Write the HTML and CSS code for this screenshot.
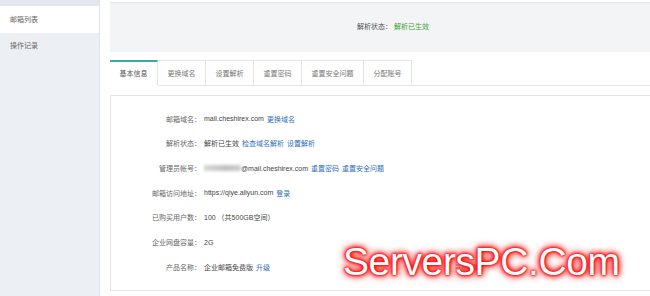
FILE: index.html
```html
<!DOCTYPE html>
<html lang="zh-CN">
<head>
    <meta charset="UTF-8" />
    <title>邮箱管理 | 基本信息</title>
    <link rel="stylesheet" href="styles.css">
</head>
<body>
    <div class="layout">
        <div class="sidebar">
            <div class="side-top"></div>
            <div class="side-item active">邮箱列表</div>
            <div class="side-item">操作记录</div>
        </div>
        <div class="main">
            <div class="status-panel">
                <span class="label-text">解析状态：</span>
                <span class="green">解析已生效</span>
            </div>
            <div class="tabs">
                <div class="tab active">基本信息</div>
                <div class="tab">更换域名</div>
                <div class="tab">设置解析</div>
                <div class="tab">重置密码</div>
                <div class="tab">重置安全问题</div>
                <div class="tab">分配账号</div>
                <div class="tab-rest"></div>
            </div>
            <div class="info-box">
                <div class="row">
                    <span class="label">邮箱域名：</span>
                    <span class="value">mail.cheshirex.com</span>
                    <a class="link">更换域名</a>
                </div>
                <div class="row">
                    <span class="label">解析状态：</span>
                    <span class="value green">解析已生效</span>
                    <a class="link">检查域名解析</a>
                    <a class="link">设置解析</a>
                </div>
                <div class="row">
                    <span class="label">管理员帐号：</span>
                    <span class="blur"></span>
                    <span class="value tight">@mail.cheshirex.com</span>
                    <a class="link">重置密码</a>
                    <a class="link">重置安全问题</a>
                </div>
                <div class="row">
                    <span class="label">邮箱访问地址：</span>
                    <span class="value">https://qiye.aliyun.com</span>
                    <a class="link">登录</a>
                </div>
                <div class="row">
                    <span class="label">已购买用户数：</span>
                    <span class="value">100 （共500GB空间）</span>
                </div>
                <div class="row">
                    <span class="label">企业网盘容量：</span>
                    <span class="value">2G</span>
                </div>
                <div class="row">
                    <span class="label">产品名称：</span>
                    <span class="value">企业邮箱免费版</span>
                    <a class="link">升级</a>
                    <span class="faint">联系客服</span>
                </div>
            </div>
        </div>
    </div>
    <div class="watermark">ServersPC.Com</div>
</body>
</html>
```
FILE: styles.css
```css
*,
*:before,
*:after{
    padding: 0;
    margin: 0;
    box-sizing: border-box;
}
body{
    background-color: #ffffff;
    font-family: "Liberation Sans", "Noto Sans CJK SC", sans-serif;
    font-size: 7px;
    color: #555555;
    width: 650px;
    height: 296px;
    overflow: hidden;
    position: relative;
}
.layout{
    display: flex;
    height: 296px;
}
.sidebar{
    width: 100px;
    flex-shrink: 0;
    background-color: #eceff3;
    border-right: 1px solid #e2e5ea;
}
.side-top{
    height: 6px;
    background-color: #e4e7ec;
}
.side-item{
    height: 26px;
    line-height: 26px;
    padding-left: 10px;
    color: #666666;
}
.side-item.active{
    height: 27px;
    line-height: 28px;
    background-color: #ffffff;
}
.main{
    flex: 1;
    padding-left: 10px;
    overflow: hidden;
}
.status-panel{
    margin-top: 2px;
    height: 50px;
    border-top: 1px solid #e4e6ea;
    background-color: #f3f4f6;
    padding-left: 247px;
    line-height: 48px;
}
.green{
    color: #3ea335;
}
.tabs{
    margin-top: 8px;
    display: flex;
    height: 26px;
}
.tab{
    height: 26px;
    line-height: 26px;
    border: 1px solid #e6e6e6;
    border-left: none;
    padding: 0 9.5px;
    color: #777777;
    background-color: #ffffff;
}
.tab.active{
    border-top: 2px solid #3aa9a6;
    border-bottom-color: #ffffff;
    border-left: none;
    line-height: 24px;
    color: #555555;
}
.tab-rest{
    flex: 1;
    border-bottom: 1px solid #e6e6e6;
}
.info-box{
    margin-top: 9px;
    width: 560px;
    border: 1px solid #e6e6e6;
    padding: 10.5px 0 11px;
}
.row{
    display: flex;
    align-items: center;
    height: 24.65px;
}
.label{
    width: 90px;
    text-align: right;
    color: #666666;
}
.value{
    margin-left: 3px;
    color: #444444;
}
.value.tight{
    margin-left: 0;
}
.link{
    margin-left: 3px;
    color: #2f6fb5;
}
.blur{
    margin-left: 3px;
    width: 37px;
    height: 6px;
    background: linear-gradient(90deg, #d6d6d6, #bfbfbf 60%, #cfcfcf);
    filter: blur(1.5px);
}
.faint{
    margin-left: 185px;
    color: #9a9aa8;
    font-size: 6px;
}
.watermark{
    position: absolute;
    left: 343px;
    top: 240px;
    font-family: "Liberation Sans", sans-serif;
    font-size: 39px;
    letter-spacing: -0.4px;
    color: #ffffff;
    text-shadow: 0 0 2px #e00000, 0 0 3px #ff0000, 0 0 5px #ff0000, 0 0 7px #ff1010, 0 0 9px #ff3030;
}
```
